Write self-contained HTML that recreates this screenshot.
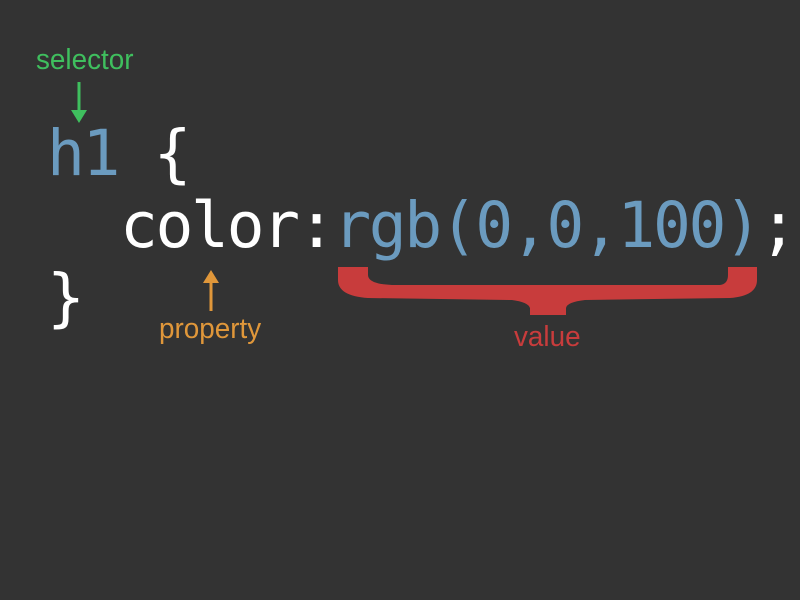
<!DOCTYPE html>
<html><head><style>
html,body{margin:0;padding:0;background:#333333;width:800px;height:600px;overflow:hidden;position:relative}
.c{position:absolute;font-family:"DejaVu Sans Mono","Liberation Mono",monospace;font-size:63px;letter-spacing:-2.4px;line-height:1;color:#fff;white-space:pre}
.b{color:#6b9bbf}
.l{position:absolute;font-family:"Liberation Sans",sans-serif;font-size:29px;line-height:1;white-space:pre;transform:scaleX(0.96);transform-origin:0 0}
</style></head><body>
<div class="l" style="left:36px;top:46px;color:#3fbf5e">selector</div>
<svg style="position:absolute;left:0;top:0" width="800" height="600">
<line x1="79" y1="82" x2="79" y2="112" stroke="#3fbf5e" stroke-width="3"/>
<polygon points="71,110 87,110 79,123" fill="#3fbf5e"/>
<line x1="211" y1="280" x2="211" y2="311" stroke="#e0973a" stroke-width="3"/>
<polygon points="203,283 219,283 211,270" fill="#e0973a"/>
<path d="M338,267 L368,267 L368,275 Q368,284 392,285 L720,285 Q728,284 728,275 L728,267 L757,267 L757,280 Q757,296 730,298 L585,300 Q567,302 566,308 L566,315 L530,315 L530,308 Q528,302 512,300 L368,298 Q338,296 338,280 Z" fill="#c83c3c"/>
</svg>
<div class="c" style="left:47px;top:122px"><span class="b">h1</span> {</div>
<div class="c" style="left:120px;top:194px">color:<span class="b">rgb(0,0,100)</span>;</div>
<div class="c" style="left:47px;top:266px">}</div>
<div class="l" style="left:159px;top:315px;color:#e0973a">property</div>
<div class="l" style="left:514px;top:323px;color:#c83c3c">value</div>
</body></html>
